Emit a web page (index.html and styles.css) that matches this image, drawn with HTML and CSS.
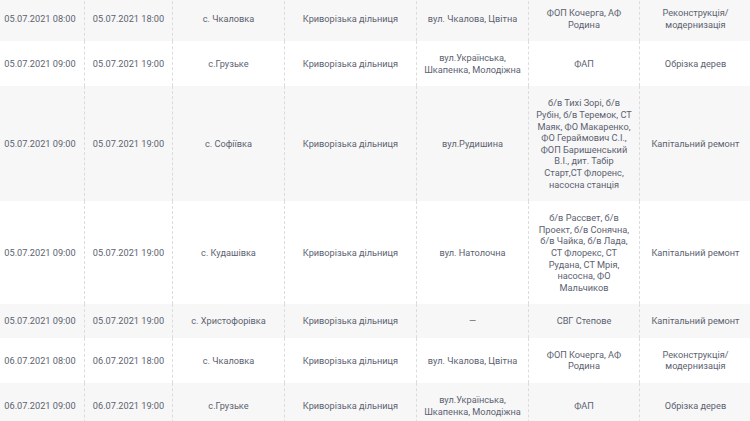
FILE: index.html
```html
<!DOCTYPE html>
<html lang="uk">
<head>
<meta charset="utf-8">
<title>Графік відключень</title>
<link rel="stylesheet" href="styles.css">
</head>
<body>
<table class="schedule">
  <colgroup>
    <col class="c-date"><col class="c-date"><col class="c-place"><col class="c-area"><col class="c-street"><col class="c-obj"><col class="c-type">
  </colgroup>
  <tbody>
    <tr class="odd">
      <td>05.07.2021 08:00</td><td>05.07.2021 18:00</td><td>с. Чкаловка</td><td>Криворізька дільниця</td><td>вул. Чкалова, Цвітна</td><td>ФОП Кочерга, АФ<br>Родина</td><td>Реконструкція/<br>модернизація</td>
    </tr>
    <tr>
      <td>05.07.2021 09:00</td><td>05.07.2021 19:00</td><td>с.Грузьке</td><td>Криворізька дільниця</td><td>вул.Українська,<br>Шкапенка, Молодіжна</td><td>ФАП</td><td>Обрізка дерев</td>
    </tr>
    <tr class="odd">
      <td>05.07.2021 09:00</td><td>05.07.2021 19:00</td><td>с. Софіївка</td><td>Криворізька дільниця</td><td>вул.Рудишина</td><td>б/в Тихі Зорі, б/в<br>Рубін, б/в Теремок, СТ<br>Маяк, ФО Макаренко,<br>ФО Гераймович С.І.,<br>ФОП Баришенський<br>В.І., дит. Табір<br>Старт,СТ Флоренс,<br>насосна станція</td><td>Капітальний ремонт</td>
    </tr>
    <tr>
      <td>05.07.2021 09:00</td><td>05.07.2021 19:00</td><td>с. Кудашівка</td><td>Криворізька дільниця</td><td>вул. Натолочна</td><td>б/в Рассвет, б/в<br>Проект, б/в Сонячна,<br>б/в Чайка, б/в Лада,<br>СТ Флорекс, СТ<br>Рудана, СТ Мрія,<br>насосна, ФО<br>Мальчиков</td><td>Капітальний ремонт</td>
    </tr>
    <tr class="odd">
      <td>05.07.2021 09:00</td><td>05.07.2021 19:00</td><td>с. Христофорівка</td><td>Криворізька дільниця</td><td>—</td><td>СВГ Степове</td><td>Капітальний ремонт</td>
    </tr>
    <tr>
      <td>06.07.2021 08:00</td><td>06.07.2021 18:00</td><td>с. Чкаловка</td><td>Криворізька дільниця</td><td>вул. Чкалова, Цвітна</td><td>ФОП Кочерга, АФ<br>Родина</td><td>Реконструкція/<br>модернизація</td>
    </tr>
    <tr class="odd">
      <td>06.07.2021 09:00</td><td>06.07.2021 19:00</td><td>с.Грузьке</td><td>Криворізька дільниця</td><td>вул.Українська,<br>Шкапенка, Молодіжна</td><td>ФАП</td><td>Обрізка дерев</td>
    </tr>
  </tbody>
</table>
</body>
</html>
```
FILE: styles.css
```css
html, body {
  margin: 0;
  padding: 0;
  background: #ffffff;
  overflow: hidden;
}

.schedule {
  table-layout: fixed;
  width: 755px;
  margin: -4px 0 0 -4px;
  border-collapse: separate;
  border-spacing: 0;
  font-family: Roboto, "Noto Sans", sans-serif;
  font-size: 9.2px;
  line-height: 11.6px;
  color: #5c6270;
}

.c-date { width: 88px; }
.c-place { width: 112px; }
.c-area { width: 132px; }
.c-street { width: 112px; }
.c-obj { width: 111px; }
.c-type { width: 112px; }

.schedule td {
  padding: 11px 3px;
  text-align: center;
  vertical-align: middle;
  border-left: 1px dashed #dcdcdc;
  white-space: nowrap;
}

.schedule td:first-child {
  border-left: none;
}

.schedule tr.odd td {
  background: #f7f7f7;
}
```
